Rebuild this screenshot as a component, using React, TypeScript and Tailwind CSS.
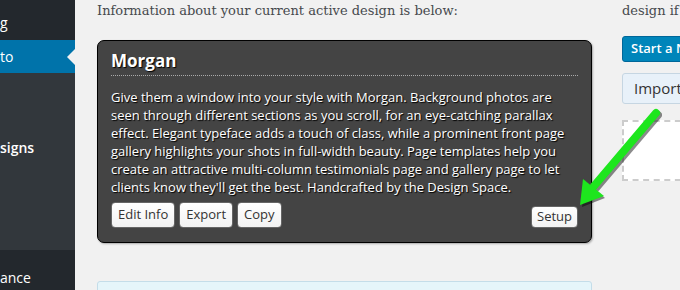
import React from "react";

const sans = { fontFamily: '"Open Sans", "Noto Sans", sans-serif' };
const serif = { fontFamily: '"DejaVu Serif", Georgia, serif' };

function Btn({ children, className = "" }: { children: React.ReactNode; className?: string }) {
  return (
    <div
      className={
        "flex items-center rounded-[4px] border border-[#666] bg-gradient-to-b from-white to-[#f2f2f2] text-[13px] text-[#333] " +
        className
      }
    >
      {children}
    </div>
  );
}

export default function App() {
  return (
    <div className="flex h-[290px] w-[680px] overflow-hidden bg-[#f1f1f1]" style={sans}>
      {/* sidebar */}
      <div className="flex w-[75px] shrink-0 flex-col text-[14px] text-white">
        <div className="flex h-[40px] shrink-0 items-center bg-[#23282d] pt-[4px]">g</div>
        <div className="relative flex h-[33px] shrink-0 items-center bg-[#0073aa]">
          to
          <div className="absolute right-0 top-[9px] h-0 w-0 border-y-[8px] border-r-[8px] border-y-transparent border-r-[#f1f1f1]" />
        </div>
        <div className="flex h-[177px] shrink-0 flex-col bg-[#32373c]">
          <div className="mt-[64px] text-[14px] font-semibold">signs</div>
        </div>
        <div className="flex flex-1 items-end bg-[#23282d] pb-[2px]">ance</div>
      </div>

      {/* main */}
      <div className="relative flex flex-1 pl-[22px]">
        <div className="flex w-[495px] shrink-0 flex-col">
          <div className="mt-[1px] h-[39px] shrink-0 text-[13px] leading-[20px] text-[#46494d]" style={serif}>
            Information about your current active design is below:
          </div>
          <div className="flex h-[203px] shrink-0 flex-col rounded-[7px] border border-black bg-[#444] px-[13px] shadow-[1px_1px_2px_rgba(0,0,0,0.3)]">
            <div
              className="mt-[8px] text-[17px] font-bold leading-[24px] text-white"
              style={{ textShadow: "1px 1px 1px #000" }}
            >
              Morgan
            </div>
            <div className="mt-[2px] border-b border-dotted border-[#aaa]" />
            <div
              className="mt-[12px] text-[13px] leading-[18px] text-white"
              style={{ textShadow: "1px 1px 1px #000" }}
            >
              Give them a window into your style with Morgan. Background photos are seen through different
              sections as you scroll, for an eye-catching parallax effect. Elegant typeface adds a touch of class,
              while a prominent front page gallery highlights your shots in full-width beauty. Page templates help
              you create an attractive multi-column testimonials page and gallery page to let clients know they'll
              get the best. Handcrafted by the Design Space.
            </div>
            <div className="mt-[6px] flex items-end gap-[4px]">
              <Btn className="h-[26px] px-[6px]">Edit Info</Btn>
              <Btn className="h-[26px] px-[6px]">Export</Btn>
              <Btn className="h-[26px] px-[6px]">Copy</Btn>
              <div className="flex-1" />
              <Btn className="h-[22px] px-[5px]">Setup</Btn>
            </div>
          </div>
          <div className="mt-[38px] h-[40px] shrink-0 rounded-[3px] border border-[#c4dde9] bg-[#e5f5fa]" />
        </div>

        {/* right column */}
        <div className="ml-[30px] flex flex-1 flex-col">
          <div className="mt-[1px] h-[35px] shrink-0 whitespace-nowrap text-[13px] leading-[20px] text-[#46494d]" style={serif}>
            design if you
          </div>
          <div className="flex h-[26px] w-[80px] shrink-0 items-center whitespace-nowrap rounded-[3px] border border-[#006799] bg-[#0085ba] px-[8px] text-[13px] font-semibold text-white">
            Start a New
          </div>
          <div className="mt-[11px] flex h-[31px] w-[80px] shrink-0 items-center whitespace-nowrap rounded-[3px] border border-[#c6d6e2] bg-[#e8f1f9] px-[11px] text-[15px] text-[#333]">
            Import
          </div>
          <div className="mt-[16px] h-[61px] w-[80px] shrink-0 border-2 border-dashed border-[#ccc] bg-white" />
        </div>

        {/* green arrow overlay */}
        <svg className="pointer-events-none absolute left-0 top-0" width="605" height="290" viewBox="75 0 605 290">
          <g transform="translate(2,2)" opacity="0.45">
            <line x1="656" y1="113" x2="594" y2="186" stroke="#000" strokeWidth="8" strokeLinecap="round" />
            <polygon points="580,205 584,180 603,196" fill="#000" />
          </g>
          <line x1="656" y1="113" x2="594" y2="186" stroke="#1ee61e" strokeWidth="8" strokeLinecap="round" />
          <polygon points="580,205 583,179 604,196" fill="#1ee61e" />
        </svg>
      </div>
    </div>
  );
}
